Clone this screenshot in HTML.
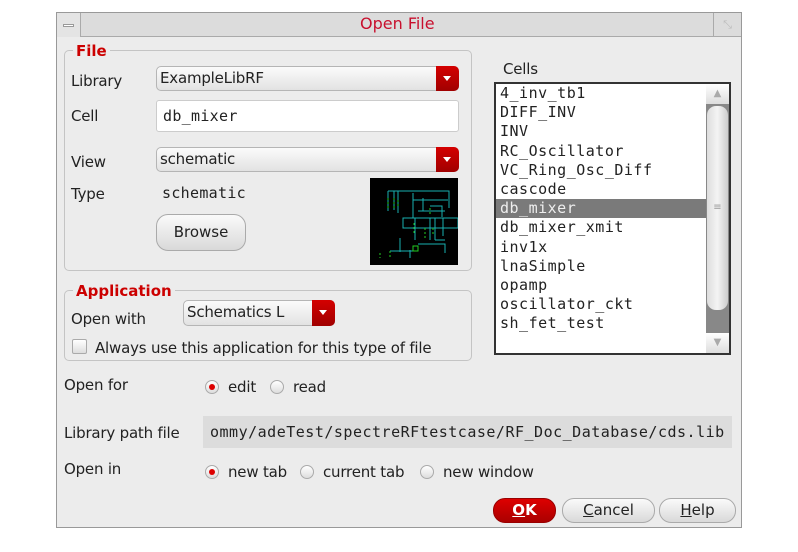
<!DOCTYPE html><html><head><style>
*{margin:0;padding:0;box-sizing:border-box}
body{width:798px;height:552px;background:#fff;position:relative;overflow:hidden;font-family:"DejaVu Sans","Liberation Sans",sans-serif;font-size:15px;color:#222}
.a{position:absolute;white-space:nowrap}
.l{letter-spacing:-0.2px}
.m{font-family:"DejaVu Sans Mono","Liberation Mono",monospace;font-size:15px}
.dlg{left:56px;top:12px;width:686px;height:516px;background:#ececec;border:1px solid #999}
.grp{border:1px solid #c4c4c4;border-radius:5px}
.lg{background:#ececec;color:#c00;font-weight:bold;padding:0 3px}
.cb{background:linear-gradient(#fbfbfb,#e2e2e2);border:1px solid #b5b5b5;border-radius:5px;padding-left:3px;line-height:22px;letter-spacing:-0.2px}
.ar{position:absolute;right:-1px;top:-1px;bottom:-1px;width:23px;background:linear-gradient(#d40000,#a00000);border-radius:0 5px 5px 0}
.ar:after{content:"";position:absolute;left:7px;top:10px;border:4px solid transparent;border-top:5px solid #fff}
.btn{background:linear-gradient(#fafafa,#d9d9d9);border:1px solid #aaa;border-radius:12px;text-align:center}
.rd{width:14px;height:14px;border-radius:50%;border:1px solid #aaa;background:linear-gradient(#fff,#ddd)}
.rd.on:after{content:"";position:absolute;left:3px;top:3px;width:6px;height:6px;border-radius:50%;background:#d00}
</style></head><body>
<div class="a dlg"></div>
<div class="a" style="left:57px;top:13px;width:684px;height:24px;background:#dcdcdc;border-bottom:1px solid #aaa"></div>
<div class="a" style="left:57px;top:13px;width:24px;height:24px;border-right:1px solid #aaa;background:#e4e4e4"></div>
<div class="a" style="left:63px;top:24px;width:11px;height:3px;background:#fff;border:1px solid #999"></div>
<div class="a" style="left:713px;top:13px;width:28px;height:24px;border-left:1px solid #aaa;color:#bbb;font-size:11px;text-align:center;line-height:24px">⤡</div>
<div class="a" style="left:360px;top:14px;color:#c8102e;font-size:16px">Open File</div>

<div class="a grp" style="left:64px;top:50px;width:408px;height:221px"></div>
<div class="a lg" style="left:73px;top:42px">File</div>
<div class="a l" style="left:71px;top:72px">Library</div>
<div class="a cb" style="left:156px;top:66px;width:303px;height:25px">ExampleLibRF<div class="ar"></div></div>
<div class="a l" style="left:71px;top:107px">Cell</div>
<div class="a m" style="left:156px;top:100px;width:303px;height:32px;background:#fff;border:1px solid #ccc;border-radius:3px;padding:6px 0 0 6px;letter-spacing:0.3px">db_mixer</div>
<div class="a l" style="left:71px;top:153px">View</div>
<div class="a cb" style="left:156px;top:147px;width:303px;height:25px">schematic<div class="ar"></div></div>
<div class="a l" style="left:71px;top:185px">Type</div>
<div class="a m" style="left:162px;top:184px;letter-spacing:0.3px">schematic</div>
<div class="a btn" style="left:156px;top:214px;width:90px;height:37px;line-height:35px;font-size:15px">Browse</div>
<div class="a" style="left:370px;top:178px;width:88px;height:87px;background:#000">
<svg width="88" height="87" viewBox="0 0 88 87" fill="none" stroke="#19b0b0" stroke-width="1">
<path d="M18 13H79V30M28 13V35M18 13V33M24 13V32M43 15V40M43 22H78M53 20V33M48 33H75M60 28H72V39M33 40H88V50H33ZM45 40V62M60 40V62M65 40V62M73 40V58M30 60V74M20 73H48M48 66H75V75M40 72V80M65 62H75"/>
<path d="M18 20V30M24 20V30M28 22V30M44 45V55M55 50V60M63 50V58M10 75V80M20 73V80M60 30V36" stroke="#2c2" stroke-dasharray="2 2"/>
<rect x="43" y="68" width="5" height="5" stroke="#2c2"/>
</svg></div>

<div class="a grp" style="left:64px;top:290px;width:408px;height:71px"></div>
<div class="a lg" style="left:73px;top:282px">Application</div>
<div class="a l" style="left:71px;top:310px">Open with</div>
<div class="a cb" style="left:183px;top:300px;width:152px;height:26px">Schematics L<div class="ar"></div></div>
<div class="a" style="left:72px;top:339px;width:15px;height:15px;border:1px solid #aaa;border-radius:2px;background:linear-gradient(#fff,#ddd)"></div>
<div class="a l" style="left:95px;top:339px">Always use this application for this type of file</div>

<div class="a l" style="left:503px;top:60px">Cells</div>
<div class="a" style="left:494px;top:82px;width:237px;height:273px;background:#fff;border:2px solid #333"></div>
<div class="a m" style="left:496px;top:84px;width:210px;line-height:19.2px;letter-spacing:0.5px">
<div style="padding-left:4px">4_inv_tb1</div><div style="padding-left:4px">DIFF_INV</div><div style="padding-left:4px">INV</div><div style="padding-left:4px">RC_Oscillator</div><div style="padding-left:4px">VC_Ring_Osc_Diff</div><div style="padding-left:4px">cascode</div><div style="padding-left:4px;background:#7a7a7a;color:#eee">db_mixer</div><div style="padding-left:4px">db_mixer_xmit</div><div style="padding-left:4px">inv1x</div><div style="padding-left:4px">lnaSimple</div><div style="padding-left:4px">opamp</div><div style="padding-left:4px">oscillator_ckt</div><div style="padding-left:4px">sh_fet_test</div></div>
<div class="a" style="left:706px;top:84px;width:23px;height:269px;background:#888"></div>
<div class="a" style="left:706px;top:84px;width:23px;height:20px;background:linear-gradient(#fff,#ddd);color:#aaa;font-size:10px;text-align:center;line-height:20px">▲</div>
<div class="a" style="left:707px;top:106px;width:21px;height:204px;background:linear-gradient(90deg,#ddd,#f4f4f4,#ccc);border-radius:9px;color:#999;text-align:center;line-height:204px;font-size:10px">≡</div>
<div class="a" style="left:706px;top:333px;width:23px;height:20px;background:linear-gradient(#fff,#ddd);color:#aaa;font-size:10px;text-align:center;line-height:20px">▼</div>

<div class="a l" style="left:64px;top:376px">Open for</div>
<div class="a rd on" style="left:205px;top:380px"></div><div class="a l" style="left:228px;top:378px">edit</div>
<div class="a rd" style="left:270px;top:380px"></div><div class="a l" style="left:293px;top:378px">read</div>
<div class="a l" style="left:64px;top:424px">Library path file</div>
<div class="a m" style="left:203px;top:416px;width:529px;height:32px;background:#dcdcdc;padding:7px 0 0 7px;letter-spacing:0.5px;overflow:hidden">ommy/adeTest/spectreRFtestcase/RF_Doc_Database/cds.lib</div>
<div class="a l" style="left:64px;top:460px">Open in</div>
<div class="a rd on" style="left:205px;top:465px"></div><div class="a l" style="left:228px;top:463px">new tab</div>
<div class="a rd" style="left:300px;top:465px"></div><div class="a l" style="left:323px;top:463px">current tab</div>
<div class="a rd" style="left:420px;top:465px"></div><div class="a l" style="left:443px;top:463px">new window</div>

<div class="a btn" style="left:493px;top:498px;width:63px;height:25px;line-height:23px;background:linear-gradient(#d00,#a00);border-color:#900;color:#fff;font-weight:bold"><u>O</u>K</div>
<div class="a btn" style="left:562px;top:498px;width:93px;height:25px;line-height:23px"><u>C</u>ancel</div>
<div class="a btn" style="left:659px;top:498px;width:77px;height:25px;line-height:23px"><u>H</u>elp</div>
</body></html>
